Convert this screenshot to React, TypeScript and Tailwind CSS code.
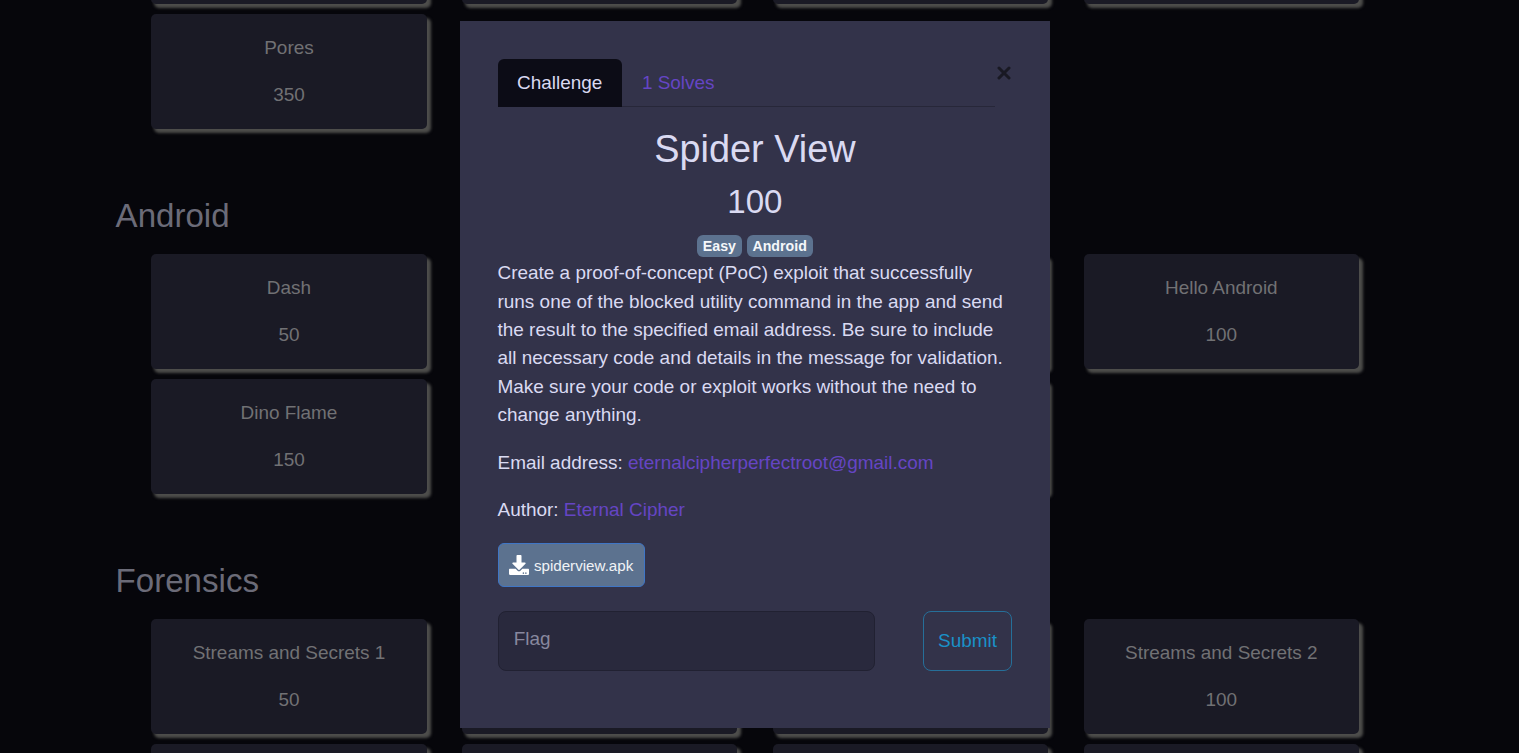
import { FaDownload } from "react-icons/fa";

type Challenge = { name: string; points: string } | null;

function Card({ item }: { item: Challenge }) {
  return (
    <div className="flex h-[115.3px] w-[275.4px] flex-col items-center rounded-[5px] bg-[#1a1a25] pt-5 text-[18.96px] leading-[28.4px] text-[#717174] shadow-[3.5px_4px_3px_#4d4d4b]">
      {item && (
        <>
          <p className="mb-[19px]">{item.name}</p>
          <p>{item.points}</p>
        </>
      )}
    </div>
  );
}

function Cards({ items }: { items: Challenge[] }) {
  return (
    <div className="grid grid-cols-[repeat(4,275.4px)] gap-x-[35.4px] gap-y-[9.7px] pl-[35.7px]">
      {items.map((item, i) => (
        <Card key={i} item={item} />
      ))}
    </div>
  );
}

function Heading({ children }: { children: string }) {
  return <h3 className="mt-[66.5px] mb-[18.2px] h-[40px] pt-[0.5px] text-[33.1px] leading-[40px] text-[#6b6b78]">{children}</h3>;
}

function Modal() {
  return (
    <div className="absolute top-[20.6px] left-[459.5px] h-[707.4px] w-[590.8px] bg-[#33334a] px-[38px] pt-[38px] text-[18.96px] leading-[28.4px] text-[#dadaf2]">
      <div className="flex items-start">
        <div className="flex h-[48.6px] w-[497.7px] border-b border-[#272739]">
          <div className="h-[48.6px] w-[124.4px] rounded-t-[6px] bg-[#0c0c16] pt-[10.8px] text-center">Challenge</div>
          <div className="pt-[10.8px] pl-[20px] text-[#6545c4]">1 Solves</div>
        </div>
        <button aria-label="Close" className="mt-[7.4px] ml-[2px]">
          <svg width="14" height="14" viewBox="0 0 14 14" fill="none" stroke="#191923" strokeWidth="3" strokeLinecap="round">
            <path d="M2 2L12 12M12 2L2 12" />
          </svg>
        </button>
      </div>
      <h2 className="mt-[18.4px] text-center text-[37.9px] leading-[46px]">Spider View</h2>
      <h3 className="mt-[10px] text-center text-[33.1px] leading-[40px]">100</h3>
      <div className="mt-[13px] flex h-[22px] justify-center gap-[5px] text-[14.2px] leading-[22px] font-bold text-[#f5f7fa]">
        <span className="w-[44.5px] rounded-[6px] bg-[#5c728f] pt-[0.4px] text-center">Easy</span>
        <span className="w-[66px] rounded-[6px] bg-[#5c728f] pt-[0.4px] text-center">Android</span>
      </div>
      <p className="mt-[2.6px] whitespace-nowrap">
        Create a proof-of-concept (PoC) exploit that successfully
        <br />
        runs one of the blocked utility command in the app and send
        <br />
        the result to the specified email address. Be sure to include
        <br />
        all necessary code and details in the message for validation.
        <br />
        Make sure your code or exploit works without the need to
        <br />
        change anything.
      </p>
      <p className="mt-[19px]">
        Email address: <span className="text-[#6545c4]">eternalcipherperfectroot@gmail.com</span>
      </p>
      <p className="mt-[19px]">
        Author: <span className="text-[#6545c4]">Eternal Cipher</span>
      </p>
      <button className="mt-[18.2px] flex h-[44.6px] w-[147.8px] items-center rounded-[6px] border border-[#3f76c6] bg-[#5c728f] pl-[10.8px] text-[15.17px] text-[#f0f2f6]">
        <FaDownload className="mr-[4.6px] size-[20px] text-white" />
        <span className="pt-[2px]">spiderview.apk</span>
      </button>
      <div className="mt-[23.4px] flex">
        <div className="h-[60.6px] w-[378px] rounded-[8px] border border-[#212132] bg-[#29293d] pt-[13.4px] pl-[15.2px] text-[#88889f]">Flag</div>
        <button className="ml-[48px] h-[60.6px] w-[89.6px] rounded-[8px] border border-[#266f99] text-[#1a91c8]">Submit</button>
      </div>
    </div>
  );
}

export default function App() {
  return (
    <div className="relative h-[753px] w-[1519px] overflow-hidden bg-[#06060b] font-['Liberation_Sans',Arial,sans-serif]">
      <main className="-mt-[111px] ml-[115.6px]">
        <Cards items={[null, null, null, null, { name: "Pores", points: "350" }]} />
        <Heading>Android</Heading>
        <Cards
          items={[
            { name: "Dash", points: "50" },
            null,
            null,
            { name: "Hello Android", points: "100" },
            { name: "Dino Flame", points: "150" },
            null,
            null,
          ]}
        />
        <Heading>Forensics</Heading>
        <Cards
          items={[
            { name: "Streams and Secrets 1", points: "50" },
            null,
            null,
            { name: "Streams and Secrets 2", points: "100" },
            null,
            null,
            null,
            null,
          ]}
        />
      </main>
      <Modal />
    </div>
  );
}
